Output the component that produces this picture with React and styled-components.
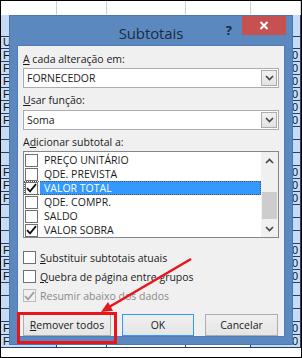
import styled, { createGlobalStyle } from 'styled-components';

const GlobalStyle = createGlobalStyle`
  html, body {
    margin: 0;
    padding: 0;
    background: #ffffff;
  }
  * {
    box-sizing: border-box;
  }
`;

const Screen = styled.div`
  position: relative;
  width: 302px;
  height: 358px;
  border: 1px solid #000;
  overflow: hidden;
  background: #fff;
  font-family: 'Open Sans', 'Liberation Sans', sans-serif;
`;

/* planilha ao fundo */
const Sheet = styled.div`
  display: flex;
  flex-direction: column;
`;

const SheetRow = styled.div`
  display: grid;
  grid-template-columns: 56px 50px 79px 65px 50px;
  height: ${props => props.h}px;
`;

const Cell = styled.div`
  background: ${props => (props.blue ? '#c6dcf6' : '#fff')};
  border-right: 1px solid ${props => (props.light ? '#d0d0d0' : '#2a3c63')};
  border-bottom: 1px solid ${props => (props.light ? '#fff' : '#2a3c63')};
  font-family: 'Liberation Sans', Arial, sans-serif;
  font-size: 11px;
  line-height: ${props => props.h - 1}px;
  color: #111;
  padding: 0 2px;
  overflow: hidden;
  white-space: nowrap;
  text-align: ${props => (props.right ? 'right' : 'left')};
`;

/* janela de diálogo */
const Dialog = styled.div`
  position: absolute;
  left: 8px;
  top: 14px;
  width: 284px;
  height: 330px;
  background: #5b89bf;
  border: 1px solid #4a78ae;
  padding: 0 7px 7px;
  display: flex;
  flex-direction: column;
`;

const TitleBar = styled.div`
  height: 29px;
  display: grid;
  grid-template-columns: 1fr auto 1fr;
  align-items: start;
`;

const Title = styled.div`
  grid-column: 2;
  padding-top: 7px;
  font-size: 15px;
  color: #1d2b3c;
  letter-spacing: -0.1px;
`;

const TitleButtons = styled.div`
  grid-column: 3;
  justify-self: end;
  display: flex;
  align-items: flex-start;
  gap: 10px;
`;

const Help = styled.div`
  padding-top: 5px;
  font-size: 13px;
  font-weight: 700;
  color: #1d2b3c;
`;

const CloseButton = styled.div`
  width: 44px;
  height: 19px;
  background: #c75050;
  display: flex;
  align-items: center;
  justify-content: center;
  margin-right: -1px;
`;

const Client = styled.div`
  flex: 1;
  background: #f0f0f0;
  border: 1px solid #4f7db3;
  padding: 6px 5px 0;
  display: flex;
  flex-direction: column;
  font-size: 10.5px;
  color: #1b1b1b;
`;

const Label = styled.div`
  height: 15px;
  line-height: 15px;
  margin-top: ${props => props.top || 0}px;
  u {
    text-decoration: underline;
  }
`;

const ComboBox = styled.div`
  height: 20px;
  margin-top: ${props => props.top || 0}px;
  background: #fff;
  border: 1px solid #abadb3;
  display: flex;
  align-items: stretch;
  padding: 1px;
`;

const ComboValue = styled.div`
  flex: 1;
  line-height: 16px;
  padding-left: 2px;
`;

const DropButton = styled.div`
  width: 16px;
  background: linear-gradient(#f0f0f0, #e3e3e3);
  border: 1px solid #acacac;
  display: flex;
  align-items: center;
  justify-content: center;
`;

const ListBox = styled.div`
  height: 87px;
  margin-top: 1px;
  background: #fff;
  border: 1px solid #828790;
  display: flex;
`;

const ListItems = styled.div`
  flex: 1;
  padding-top: 1px;
  display: flex;
  flex-direction: column;
`;

const ListItem = styled.div`
  height: 14px;
  display: flex;
  align-items: center;
  padding-left: 1px;
  outline: ${props => (props.focused ? '1px dotted #555' : 'none')};
  outline-offset: -1px;
`;

const ItemText = styled.div`
  flex: 1;
  height: 14px;
  line-height: 14px;
  margin-left: 2px;
  padding-left: 4px;
  background: ${props => (props.selected ? '#3399ff' : 'transparent')};
  color: ${props => (props.selected ? '#fff' : '#1b1b1b')};
`;

const Box = styled.div`
  width: 13px;
  height: 13px;
  flex: none;
  background: ${props => (props.disabled ? '#f0f0f0' : '#fff')};
  border: 1px solid ${props => (props.disabled ? '#bcbcbc' : '#707070')};
  display: flex;
  align-items: center;
  justify-content: center;
`;

const ScrollBar = styled.div`
  width: 17px;
  background: #f0f0f0;
  display: flex;
  flex-direction: column;
  align-items: center;
  padding: 0 1px;
`;

const ScrollArrow = styled.div`
  height: 17px;
  width: 100%;
  display: flex;
  align-items: center;
  justify-content: center;
`;

const ScrollTrack = styled.div`
  flex: 1;
  width: 100%;
  display: flex;
  flex-direction: column;
  justify-content: flex-end;
  padding-bottom: 1px;
`;

const ScrollThumb = styled.div`
  height: 27px;
  width: 100%;
  background: #cdcdcd;
`;

const Options = styled.div`
  margin-top: 10px;
  display: flex;
  flex-direction: column;
`;

const CheckRow = styled.div`
  height: 19px;
  display: flex;
  align-items: center;
  gap: 4px;
  color: ${props => (props.disabled ? '#8a8a8a' : '#1b1b1b')};
`;

const ButtonRow = styled.div`
  margin-top: 9px;
  display: flex;
  gap: 11px;
`;

const Button = styled.div`
  width: ${props => props.w}px;
  height: 22px;
  border: 1px solid ${props => (props.primary ? '#3399ff' : '#adadad')};
  background: linear-gradient(#f0f0f0, #e5e5e5);
  display: flex;
  align-items: center;
  justify-content: center;
  font-size: 10.5px;
  color: #1b1b1b;
`;

/* anotações em vermelho por cima da captura */
const Highlight = styled.div`
  position: absolute;
  left: 16px;
  top: 311px;
  width: 100px;
  height: 32px;
  border: 3px solid #e8151d;
`;

const ArrowLayer = styled.svg`
  position: absolute;
  left: 0;
  top: 0;
  pointer-events: none;
`;

const Chevron = ({ up }) => (
  <svg width="9" height="6" viewBox="0 0 9 6">
    <polyline
      points={up ? '1,5 4.5,1.5 8,5' : '1,1 4.5,4.5 8,1'}
      fill="none"
      stroke="#444"
      strokeWidth="1.6"
    />
  </svg>
);

const Check = ({ grey }) => (
  <svg width="11" height="10" viewBox="0 0 11 10">
    <path d="M1 5.2 L4 8.3 L10 1.2" fill="none" stroke={grey ? '#a0a0a0' : '#111'} strokeWidth="1.8" />
  </svg>
);

const sheetRows = (() => {
  const rows = [
    { h: 14, light: true, top: true },
    { h: 22, blue: true },
    { h: 12, blue: true, a: 'U' },
  ];
  const pattern = [1, 1, 1, 1, 1, 1, 0, 0, 0, 1, 1, 1, 0, 0, 0, 1, 1, 1, 0, 0, 0, 1, 1];
  pattern.forEach(p => rows.push({ h: 13, blue: true, a: p ? 'F' : '', e: p ? '0' : '' }));
  return rows;
})();

const items = [
  { label: 'PREÇO UNITÁRIO' },
  { label: 'QDE. PREVISTA' },
  { label: 'VALOR TOTAL', checked: true, selected: true },
  { label: 'QDE. COMPR.' },
  { label: 'SALDO' },
  { label: 'VALOR SOBRA', checked: true },
];

export default function App() {
  return (
    <>
      <GlobalStyle />
      <Screen>
        <Sheet>
          {sheetRows.map((r, i) => (
            <SheetRow key={i} h={r.h}>
              <Cell h={r.h} blue={r.blue} light={r.top}>{r.a}</Cell>
              <Cell h={r.h} light={r.top} />
              <Cell h={r.h} light={r.top} />
              <Cell h={r.h} light={r.top} />
              <Cell h={r.h} blue={r.blue} light={r.top} right>{r.e}</Cell>
            </SheetRow>
          ))}
        </Sheet>

        <Dialog>
          <TitleBar>
            <Title>Subtotais</Title>
            <TitleButtons>
              <Help>?</Help>
              <CloseButton>
                <svg width="10" height="9" viewBox="0 0 10 9">
                  <path d="M1.5 1 L8.5 8 M8.5 1 L1.5 8" stroke="#fff" strokeWidth="2" />
                </svg>
              </CloseButton>
            </TitleButtons>
          </TitleBar>

          <Client>
            <Label><u>A</u> cada alteração em:</Label>
            <ComboBox top={1}>
              <ComboValue>FORNECEDOR</ComboValue>
              <DropButton><Chevron /></DropButton>
            </ComboBox>

            <Label top={5}><u>U</u>sar função:</Label>
            <ComboBox top={2}>
              <ComboValue>Soma</ComboValue>
              <DropButton><Chevron /></DropButton>
            </ComboBox>

            <Label top={5}>A<u>d</u>icionar subtotal a:</Label>
            <ListBox>
              <ListItems>
                {items.map(it => (
                  <ListItem key={it.label} focused={it.selected}>
                    <Box>{it.checked && <Check />}</Box>
                    <ItemText selected={it.selected}>{it.label}</ItemText>
                  </ListItem>
                ))}
              </ListItems>
              <ScrollBar>
                <ScrollArrow><Chevron up /></ScrollArrow>
                <ScrollTrack>
                  <ScrollThumb />
                </ScrollTrack>
                <ScrollArrow><Chevron /></ScrollArrow>
              </ScrollBar>
            </ListBox>

            <Options>
              <CheckRow>
                <Box />
                <span><u>S</u>ubstituir subtotais atuais</span>
              </CheckRow>
              <CheckRow>
                <Box />
                <span><u>Q</u>uebra de página entre grupos</span>
              </CheckRow>
              <CheckRow disabled>
                <Box disabled><Check grey /></Box>
                <span>Resumir abaixo dos dados</span>
              </CheckRow>
            </Options>

            <ButtonRow>
              <Button w={88}><span><u>R</u>emover todos</span></Button>
              <Button w={72} primary>OK</Button>
              <Button w={73}>Cancelar</Button>
            </ButtonRow>
          </Client>
        </Dialog>

        <Highlight />
        <ArrowLayer width="302" height="358" viewBox="0 0 302 358">
          <line x1="190" y1="258" x2="109" y2="305.5" stroke="#e8151d" strokeWidth="2.6" />
          <polygon points="100,311 112,309.7 107,301.1" fill="#e8151d" />
        </ArrowLayer>
      </Screen>
    </>
  );
}
